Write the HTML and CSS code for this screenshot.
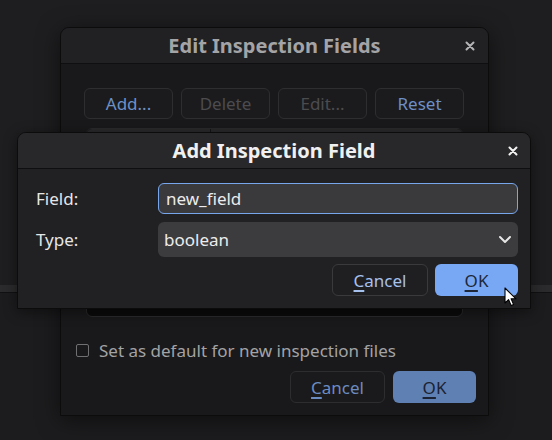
FILE: index.html
```html
<!DOCTYPE html>
<html lang="en">
<head>
<meta charset="utf-8">
<title>Add Inspection Field</title>
<link rel="stylesheet" href="styles.css">
</head>
<body>
<div class="desktop">
  <div class="app-top"></div>
  <div class="app-band"></div>
  <div class="app-bottom"></div>

  <section class="dialog dialog-back">
    <header class="titlebar titlebar-back">
      <h1 class="title">Edit Inspection Fields</h1>
      <span class="close">
        <svg width="10" height="10" viewBox="0 0 10 10"><path d="M1.5 1.5 L8.5 8.5 M8.5 1.5 L1.5 8.5" /></svg>
      </span>
    </header>
    <div class="back-body">
      <div class="tool-row">
        <button class="btn btn-tool btn-link">Add...</button>
        <button class="btn btn-tool btn-disabled">Delete</button>
        <button class="btn btn-tool btn-disabled">Edit...</button>
        <button class="btn btn-tool btn-link">Reset</button>
      </div>
      <div class="listbox">
        <div class="list-header">
          <div class="col col-name"></div>
          <div class="col col-type"></div>
        </div>
        <div class="list-body"></div>
      </div>
      <label class="check-row">
        <span class="checkbox"></span>
        <span class="check-label">Set as default for new inspection files</span>
      </label>
      <div class="action-row">
        <button class="btn btn-cancel-back"><u>C</u>ancel</button>
        <button class="btn btn-ok-back"><u>O</u>K</button>
      </div>
    </div>
  </section>

  <section class="dialog dialog-front">
    <header class="titlebar titlebar-front">
      <h1 class="title">Add Inspection Field</h1>
      <span class="close">
        <svg width="10" height="10" viewBox="0 0 10 10"><path d="M1.5 1.5 L8.5 8.5 M8.5 1.5 L1.5 8.5" /></svg>
      </span>
    </header>
    <div class="front-body">
      <div class="form">
        <span class="label">Field:</span>
        <div class="entry">new_field</div>
        <span class="label">Type:</span>
        <div class="combo">
          <span>boolean</span>
          <svg class="chevron" width="14" height="9" viewBox="0 0 14 9"><path d="M2 2 L7 7 L12 2" /></svg>
        </div>
      </div>
      <div class="action-row front-actions">
        <button class="btn btn-cancel"><u>C</u>ancel</button>
        <button class="btn btn-ok"><u>O</u>K</button>
      </div>
    </div>
  </section>

  <svg class="cursor" width="16" height="22" viewBox="0 0 16 22">
    <path d="M1 1 L1 16 L4.6 12.6 L7.2 18.6 L9.6 17.6 L7.1 11.8 L12 11.8 Z" fill="#ffffff" stroke="#000000" stroke-width="1.1" stroke-linejoin="round"/>
  </svg>
</div>
</body>
</html>
```

FILE: styles.css
```css
* { box-sizing: border-box; }

html, body {
  margin: 0;
  padding: 0;
  background: #1d1d1f;
}

body {
  width: 552px;
  height: 440px;
  overflow: hidden;
  font-family: "Noto Sans", "Open Sans", sans-serif;
}

.desktop {
  position: relative;
  width: 552px;
  height: 440px;
  display: flex;
  flex-direction: column;
  background: #1d1d1f;
}

.app-top {
  height: 285px;
  background: #1e1e20;
}

.app-band {
  height: 8px;
  background: #2b2b2d;
  border-bottom: 1px solid #111113;
}

.app-bottom {
  flex: 1;
  background: #1c1c1e;
}

/* dialogs (windows on the desktop) */
.dialog {
  position: absolute;
  display: flex;
  flex-direction: column;
  border: 1px solid #0c0c0d;
  border-radius: 9px 9px 0 0;
}

.titlebar {
  position: relative;
  display: flex;
  align-items: center;
  justify-content: center;
  border-bottom: 1px solid #0f0f11;
  border-radius: 8px 8px 0 0;
}

.title {
  margin: 0;
  font-size: 20px;
  font-weight: 700;
  line-height: 24px;
}

.close {
  position: absolute;
  top: 50%;
  display: flex;
  transform: translateY(-50%);
}

.close svg path {
  fill: none;
  stroke-width: 2;
  stroke-linecap: round;
}

.btn {
  font-family: inherit;
  font-size: 17px;
  height: 32px;
  padding: 0;
  border-radius: 6px;
  display: flex;
  align-items: center;
  justify-content: center;
}

.btn u {
  text-decoration-thickness: 1.5px;
  text-underline-offset: 3px;
}

/* ------- back dialog ------- */
.dialog-back {
  left: 60px;
  top: 27px;
  width: 429px;
  height: 389px;
  background: #19191b;
  box-shadow: 0 4px 22px rgba(0, 0, 0, 0.5);
}

.titlebar-back {
  height: 36px;
  background: #212123;
}

.titlebar-back .title {
  color: #a4a4a6;
}

.titlebar-back .close {
  right: 13px;
}

.titlebar-back .close path {
  stroke: #b4b4b6;
}

.back-body {
  flex: 1;
  display: flex;
  flex-direction: column;
  padding: 24px 12px 12px 15px;
}

.tool-row {
  display: grid;
  grid-template-columns: repeat(4, 89px);
  gap: 8px;
  margin: 0 12px 0 8px;
}

.btn-tool {
  height: 31px;
  background: #1b1b1d;
  border: 1px solid #2e2e30;
}

.btn-link {
  color: #6d90c6;
}

.btn-disabled {
  color: #4c4c4f;
}

.listbox {
  margin: 9px 13px 0 10px;
  height: 189px;
  display: flex;
  flex-direction: column;
  border: 1px solid #2a2a2c;
  border-radius: 6px;
  overflow: hidden;
  background: #0b0b0c;
}

.list-header {
  height: 28px;
  display: flex;
  background: #29292b;
}

.col-name {
  width: 124px;
  border-right: 1px solid #151517;
}

.list-body {
  flex: 1;
}

.check-row {
  display: flex;
  align-items: center;
  gap: 10px;
  height: 21px;
  margin: 23px 0 0 0;
}

.checkbox {
  width: 13px;
  height: 13px;
  border: 1.5px solid #707073;
  border-radius: 2px;
}

.check-label {
  font-size: 17px;
  color: #a3a3a5;
  line-height: 21px;
}

.action-row {
  display: flex;
  justify-content: flex-end;
  gap: 8px;
  margin-top: 10px;
}

.btn-cancel-back {
  width: 95px;
  background: #1a1a1c;
  border: 1px solid #2d2d2f;
  color: #6a8cc2;
}

.btn-ok-back {
  width: 83px;
  background: #5f80b2;
  border: none;
  color: #1b2231;
}

/* ------- front dialog ------- */
.dialog-front {
  left: 17px;
  top: 132px;
  width: 514px;
  height: 177px;
  background: #212124;
  box-shadow: 0 3px 14px rgba(0, 0, 0, 0.45);
}

.titlebar-front {
  height: 37px;
  background: #28282a;
}

.titlebar-front .title {
  color: #f0f0f0;
}

.titlebar-front .close {
  right: 12px;
}

.titlebar-front .close path {
  stroke: #f2f2f2;
}

.front-body {
  flex: 1;
  padding: 14px 12px 12px 18px;
  display: flex;
  flex-direction: column;
}

.form {
  display: grid;
  grid-template-columns: 122px 1fr;
  grid-template-rows: 31px 35px;
  row-gap: 8px;
  align-items: center;
}

.label {
  font-size: 17px;
  color: #e6e6e6;
}

.entry {
  height: 31px;
  display: flex;
  align-items: center;
  padding-left: 7px;
  background: #3a3a3d;
  border: 1px solid #78a6ec;
  border-radius: 6px;
  font-size: 17px;
  color: #ececec;
}

.combo {
  height: 35px;
  display: flex;
  align-items: center;
  justify-content: space-between;
  padding: 0 6px 0 6px;
  background: #3c3c3f;
  border-radius: 6px;
  font-size: 17px;
  color: #ececec;
}

.chevron path {
  fill: none;
  stroke: #e6e6e6;
  stroke-width: 2;
  stroke-linecap: round;
  stroke-linejoin: round;
}

.front-actions {
  margin-top: 7px;
  gap: 7px;
}

.btn-cancel {
  width: 96px;
  background: #1f1f22;
  border: 1px solid #3a3a3d;
  color: #a6c1ee;
}

.btn-ok {
  width: 83px;
  background: #78a8f3;
  border: none;
  color: #1d2738;
}

.cursor {
  position: absolute;
  left: 504px;
  top: 287px;
}
```
